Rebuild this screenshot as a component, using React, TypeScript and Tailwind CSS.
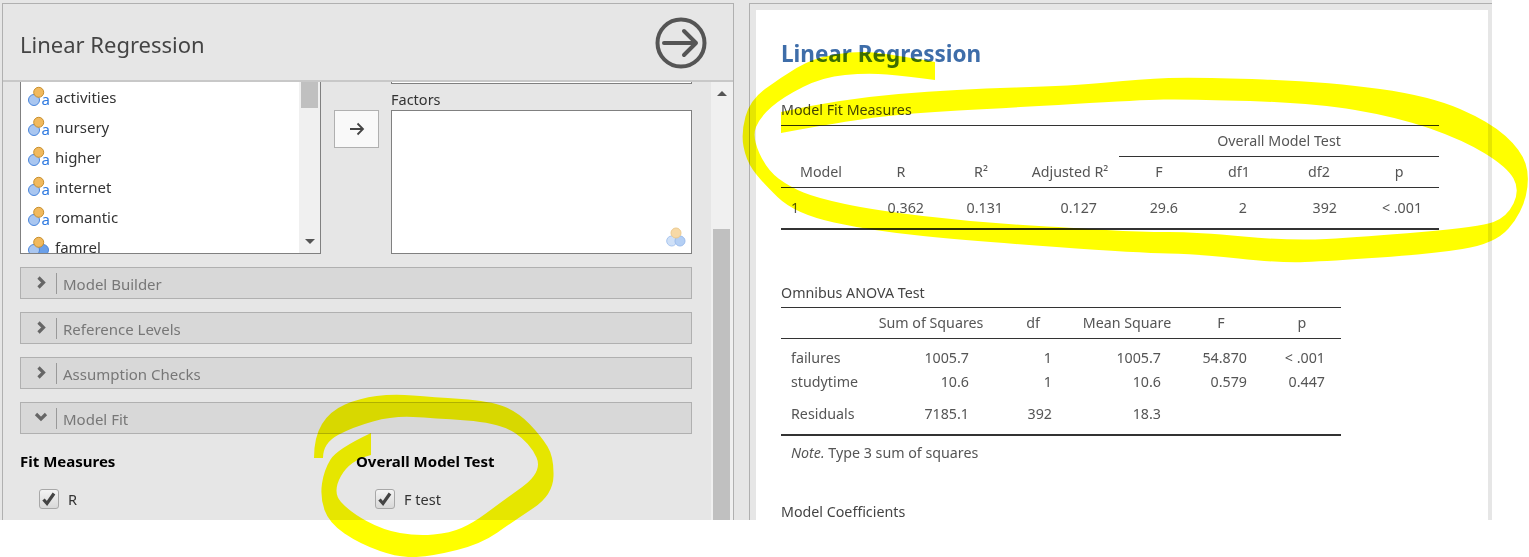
type Pt = [number, number];

const FONT = "font-['Noto_Sans','Open_Sans',sans-serif]";

// each mark is the two edges of a felt pen stroke, traced from the picture
const bigMark: Pt[][] = [
  [
    [935, 62], [890, 54], [857, 51], [813, 58], [780, 78], [750, 100], [741, 133], [746, 160], [760, 180], [795, 214],
    [873, 231], [973, 241], [1140, 253], [1197, 254], [1280, 263], [1330, 261], [1430, 254], [1495, 244], [1522, 213],
    [1530, 177], [1521, 150], [1490, 122], [1430, 96], [1330, 82], [1197, 77], [1140, 79], [1073, 86], [957, 89],
    [840, 99], [781, 112],
  ],
  [
    [781, 133], [840, 122], [910, 113], [1007, 108], [1140, 100], [1187, 99], [1313, 103], [1397, 117], [1463, 140],
    [1507, 167], [1520, 190], [1507, 217], [1480, 227], [1363, 237], [1290, 241], [1197, 232], [1140, 232],
    [1073, 228], [973, 222], [873, 210], [817, 198], [790, 187], [767, 170], [752, 137], [760, 117], [783, 97],
    [823, 77], [867, 73], [907, 76], [935, 80],
  ],
];

const smallMark: Pt[][] = [
  [
    [314, 458], [314, 437], [330, 411], [360, 398], [393, 394], [433, 397], [490, 401], [518, 412], [541, 436],
    [554, 457], [553, 495], [514, 521], [481, 544], [433, 556], [400, 558], [360, 544], [329, 523], [320, 497],
    [324, 470], [337, 449], [371, 433],
  ],
  [
    [371, 455], [350, 460], [332, 492], [350, 512], [383, 530], [417, 536], [450, 533], [473, 523], [500, 503],
    [543, 472], [530, 443], [500, 423], [433, 418], [393, 416], [353, 427], [323, 443], [323, 458],
  ],
];

function edge(points: Pt[]) {
  let d = `L${points[0][0]} ${points[0][1]}`;
  for (let i = 1; i < points.length - 1; i++) {
    const [x, y] = points[i];
    const [nx, ny] = points[i + 1];
    const last = i === points.length - 2;
    d += ` Q${x} ${y} ${last ? nx : (x + nx) / 2} ${last ? ny : (y + ny) / 2}`;
  }
  return d;
}

function markPath(edges: Pt[][]) {
  return `M${edges[0][0][0]} ${edges[0][0][1]} ` + edges.map(edge).join(" ") + " Z";
}

function VarIcon({ kind }: { kind: "nominal" | "ordinal" }) {
  return (
    <svg width="24" height="24" viewBox="0 0 24 24" className="mt-[2px] shrink-0">
      {kind === "ordinal" && <circle cx="16" cy="14" r="5.500" fill="#6a9fe8" stroke="#4a86dc" />}
      <circle cx="7" cy="14" r="5.500" fill="#a9c6f0" stroke="#4a86dc" />
      <circle cx="11.700" cy="6.300" r="5" fill="#f0b95e" stroke="#c98f2c" />
      {kind === "nominal" && (
        <text x="14.500" y="19" fontSize="15" fill="#2f7ae0" fontFamily="Noto Sans">
          a
        </text>
      )}
    </svg>
  );
}

function ListItem({ label, kind = "nominal" }: { label: string; kind?: "nominal" | "ordinal" }) {
  return (
    <div className="flex h-[30px] shrink-0 items-center gap-[4px] pl-[6px] text-[15px] text-[#333]">
      <VarIcon kind={kind} />
      <span className="leading-[22px]">{label}</span>
    </div>
  );
}

function Section({ label, open }: { label: string; open?: boolean }) {
  return (
    <div className="flex h-[32px] items-center border border-[#b0b0b0] bg-[#d8d8d8]">
      <div className="flex w-[35px] justify-center pb-[2px] pl-[5px]">
        {open ? (
          <svg width="14" height="10" viewBox="0 0 14 10" fill="none" stroke="#666" strokeWidth="3.200">
            <path d="M2 2l5 5 5-5" />
          </svg>
        ) : (
          <svg width="10" height="13" viewBox="0 0 10 13" fill="none" stroke="#666" strokeWidth="3.200">
            <path d="M2.500 1.500l5 5-5 5" />
          </svg>
        )}
      </div>
      <div className="h-[21px] w-px bg-[#999]" />
      <span className="pl-[6px] pt-[3px] text-[15px] text-[#777]">{label}</span>
    </div>
  );
}

function Check({ label }: { label: string }) {
  return (
    <div className="mt-[17px] flex items-center pl-[19px]">
      <div className="flex h-[20px] w-[20px] items-center justify-center rounded-[3px] border border-[#a8a8a8] bg-gradient-to-b from-[#f4f4f4] to-[#d8d8d8]">
        <svg width="16" height="16" viewBox="0 0 16 16" fill="none" stroke="#444" strokeWidth="3.200">
          <path d="M2.500 8.500l3.500 4 7-10" />
        </svg>
      </div>
      <span className="pl-[9px] pt-px text-[14.500px] text-[#333]">{label}</span>
    </div>
  );
}

function FitTable() {
  const head = "h-[31px] p-0 text-center font-normal";
  const cell = "p-0 text-right font-normal";
  return (
    <table className="w-[658px] table-fixed border-collapse text-[14.25px] text-[#555]">
      <colgroup>
        <col className="w-[80px]" />
        <col className="w-[80px]" />
        <col className="w-[80px]" />
        <col className="w-[98px]" />
        <col className="w-[80px]" />
        <col className="w-[80px]" />
        <col className="w-[80px]" />
        <col className="w-[80px]" />
      </colgroup>
      <thead>
        <tr className="border-t border-[#333]">
          <th colSpan={4} className={head} />
          <th colSpan={4} className={`${head} border-b border-[#333]`}>
            Overall Model Test
          </th>
        </tr>
        <tr className="border-b border-[#333]">
          {["Model", "R", "R²", "Adjusted R²", "F", "df1", "df2", "p"].map((h) => (
            <th key={h} className={head}>
              {h}
            </th>
          ))}
        </tr>
      </thead>
      <tbody>
        <tr className="h-[41px] border-b-2 border-[#333]">
          <td className="p-0 pl-[10px] font-normal">1</td>
          <td className={`${cell} pr-[17px]`}>0.362</td>
          <td className={`${cell} pr-[18px]`}>0.131</td>
          <td className={`${cell} pr-[22px]`}>0.127</td>
          <td className={`${cell} pr-[21px]`}>29.6</td>
          <td className={`${cell} pr-[32px]`}>2</td>
          <td className={`${cell} pr-[22px]`}>392</td>
          <td className={`${cell} pr-[17px]`}>&lt; .001</td>
        </tr>
      </tbody>
    </table>
  );
}

const anovaRows = [
  { name: "failures", ss: "1005.7", df: "1", ms: "1005.7", f: "54.870", p: "< .001", h: "h-[24px]" },
  { name: "studytime", ss: "10.6", df: "1", ms: "10.6", f: "0.579", p: "0.447", h: "h-[24px]" },
  { name: "Residuals", ss: "7185.1", df: "392", ms: "18.3", f: "", p: "", h: "h-[41px]" },
];

function AnovaTable() {
  const head = "p-0 text-center font-normal";
  return (
    <table className="w-[560px] table-fixed border-collapse text-[14.25px] text-[#555]">
      <colgroup>
        <col className="w-[90px]" />
        <col className="w-[120px]" />
        <col className="w-[84px]" />
        <col className="w-[104px]" />
        <col className="w-[84px]" />
        <col className="w-[78px]" />
      </colgroup>
      <thead>
        <tr className="h-[31px] border-y border-[#333]">
          <th className={head} />
          <th className={head}>Sum of Squares</th>
          <th className={head}>df</th>
          <th className={head}>Mean Square</th>
          <th className={head}>F</th>
          <th className={head}>p</th>
        </tr>
      </thead>
      <tbody className="border-b-2 border-[#333]">
        <tr className="h-[8px]" />
        {anovaRows.map((r) => (
          <tr key={r.name} className={r.h}>
            <td className="p-0 pl-[10px]">{r.name}</td>
            <td className="p-0 pr-[22px] text-right">{r.ss}</td>
            <td className="p-0 pr-[23px] text-right">{r.df}</td>
            <td className="p-0 pr-[18px] text-right">{r.ms}</td>
            <td className="p-0 pr-[16px] text-right">{r.f}</td>
            <td className="p-0 pr-[16px] text-right">{r.p}</td>
          </tr>
        ))}
      </tbody>
    </table>
  );
}

export default function App() {
  return (
    <div className={`relative h-[557px] w-[1529px] overflow-hidden bg-white ${FONT}`}>
      <div className="flex h-[520px] w-[1492px] gap-[15px] bg-[#e6e6e6] pl-[2px] pt-[3px]">
        {/* options panel */}
        <div className="flex w-[732px] flex-col overflow-hidden border-l border-r border-t border-[#b0b0b0]">
          <div className="flex h-[78px] shrink-0 items-center justify-between border-b-2 border-[#c8c8c8] pl-[17px] pr-[26px]">
            <h2 className="pt-[4px] text-[22px] font-normal text-[#444]">Linear Regression</h2>
            <svg width="52" height="52" viewBox="0 0 52 52" fill="none" stroke="#555" strokeWidth="4" className="mt-[1px]">
              <circle cx="26" cy="26" r="23.500" />
              <path d="M9 26h32M29 14l12 12-12 12" strokeLinecap="round" strokeLinejoin="round" />
            </svg>
          </div>
          <div className="flex min-h-0 flex-1">
            <div className="w-[708px] shrink-0 pl-[17px]">
              <div className="flex h-[172px] w-[672px]">
                <div className="relative flex h-full w-[301px] border-x border-b border-[#808080] bg-white">
                  <div className="flex min-w-0 flex-1 flex-col overflow-hidden">
                    <ListItem label="activities" />
                    <ListItem label="nursery" />
                    <ListItem label="higher" />
                    <ListItem label="internet" />
                    <ListItem label="romantic" />
                    <ListItem label="famrel" kind="ordinal" />
                  </div>
                  <div className="flex w-[21px] shrink-0 flex-col items-center justify-between bg-[#f0f0f0] pb-[9px]">
                    <div className="h-[26px] w-[17px] bg-[#c0c0c0]" />
                    <div className="h-0 w-0 border-x-[5px] border-t-[5px] border-x-transparent border-t-[#555]" />
                  </div>
                </div>
                <div className="ml-[13px] mt-[28px] flex h-[38px] w-[45px] items-center justify-center border border-[#b0b0b0] bg-[#f9f9f9]">
                  <svg width="16" height="14" viewBox="0 0 16 14" fill="none" stroke="#444" strokeWidth="1.800">
                    <path d="M1 7h13M8.500 1.500 14 7l-5.500 5.500" />
                  </svg>
                </div>
                <div className="ml-[12px] flex w-[301px] flex-col">
                  <div className="h-[2px] border-x border-b border-[#808080] bg-white" />
                  <div className="flex h-[26px] items-end text-[14.500px] leading-[22px] text-[#333]">Factors</div>
                  <div className="flex flex-1 items-end justify-end border border-[#808080] bg-white pb-[6px] pr-[5px]">
                    <svg width="22" height="20" viewBox="0 0 22 20">
                      <circle cx="7.700" cy="14" r="5" fill="#cfe0f7" stroke="#a9c6f0" />
                      <circle cx="16" cy="14" r="5" fill="#b4cff4" stroke="#9dbdec" />
                      <circle cx="12" cy="6" r="5" fill="#f7d9a6" stroke="#eccb91" />
                    </svg>
                  </div>
                </div>
              </div>
              <div className="mt-[13px] flex w-[672px] flex-col gap-[13px]">
                <Section label="Model Builder" />
                <Section label="Reference Levels" />
                <Section label="Assumption Checks" />
                <Section label="Model Fit" open />
              </div>
              <div className="mt-[17px] flex">
                <div className="w-[336px]">
                  <div className="text-[15px] font-bold leading-[20px] text-black">Fit Measures</div>
                  <Check label="R" />
                </div>
                <div>
                  <div className="text-[15px] font-bold leading-[20px] text-black">Overall Model Test</div>
                  <Check label="F test" />
                </div>
              </div>
            </div>
            <div className="flex w-[22px] shrink-0 flex-col items-center justify-between bg-[#f0f0f0] pr-px pt-[9px]">
              <div className="h-0 w-0 border-x-[5px] border-b-[5px] border-x-transparent border-b-[#555]" />
              <div className="h-[291px] w-[17px] bg-[#c0c0c0]" />
            </div>
          </div>
        </div>

        {/* results panel */}
        <div className="flex min-w-0 flex-1 flex-col overflow-hidden border-l border-t border-[#b0b0b0] pl-[6px] pr-[4px] pt-[6px]">
          <div className="flex-1 overflow-hidden bg-white pl-[25px]">
            <h1 className="pt-[26px] text-[22.500px] font-bold leading-[36px] text-[#3e6da9]">Linear Regression</h1>
            <div className="mt-[28px] text-[14.25px] leading-[20px] text-[#444]">Model Fit Measures</div>
            <div className="mt-[5px]">
              <FitTable />
            </div>
            <div className="mt-[53px] text-[14.25px] leading-[20px] text-[#444]">Omnibus ANOVA Test</div>
            <div className="mt-[4px]">
              <AnovaTable />
            </div>
            <div className="mt-[7px] pl-[10px] text-[14.25px] leading-[20px] text-[#555]">
              <em>Note.</em> Type 3 sum of squares
            </div>
            <div className="mt-[39px] text-[14.25px] leading-[20px] text-[#444]">Model Coefficients</div>
          </div>
        </div>
      </div>

      {/* highlighter marks drawn over the screenshot */}
      <svg
        className="pointer-events-none absolute left-0 top-0 mix-blend-multiply"
        width="1529"
        height="557"
        viewBox="0 0 1529 557"
      >
        <path d={markPath(bigMark)} fill="#ffff00" />
        <path d={markPath(smallMark)} fill="#ffff00" />
      </svg>
    </div>
  );
}
